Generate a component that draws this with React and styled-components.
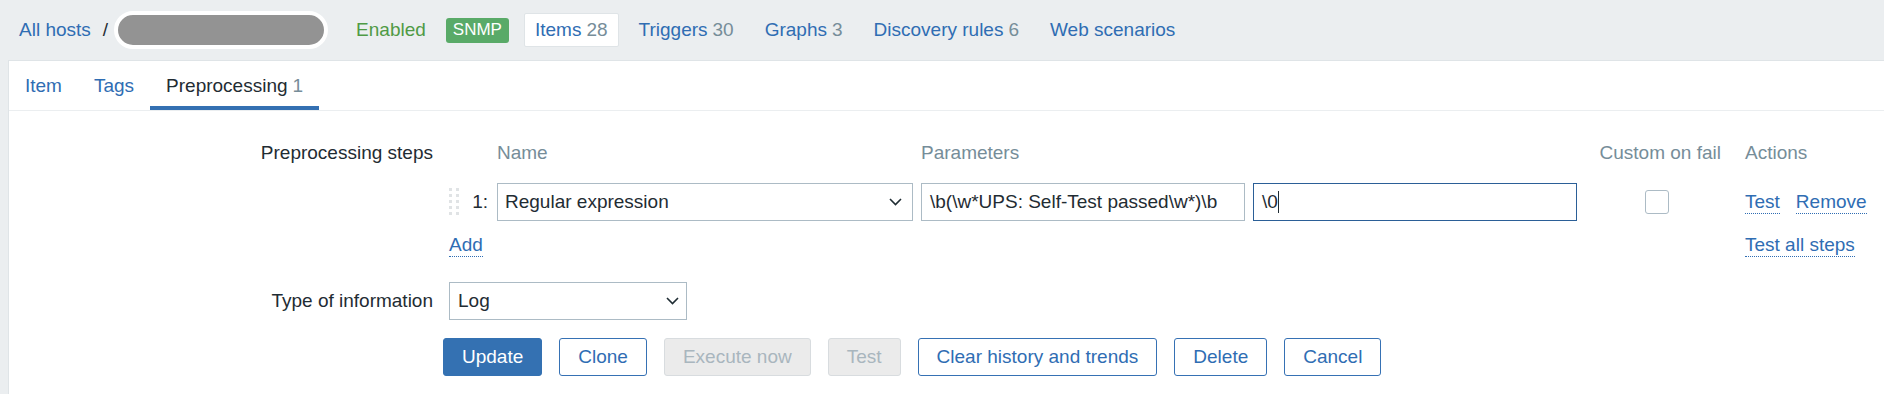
import React from 'react';
import styled, { createGlobalStyle, css } from 'styled-components';

const GlobalStyle = createGlobalStyle`
  html, body {
    margin: 0;
    padding: 0;
    background: #ebeef0;
  }
  body {
    font-family: "Liberation Sans", Arial, sans-serif;
    font-size: 19px;
    color: #1f2c33;
  }
  * {
    box-sizing: border-box;
  }
`;

const blue = '#2f6db3';
const gray = '#768d99';
const line = '#acbbc5';

const Header = styled.header`
  display: flex;
  align-items: center;
  height: 60px;
  padding-left: 19px;
  white-space: nowrap;
`;

const Link = styled.a`
  color: ${blue};
  text-decoration: none;
  cursor: pointer;
`;

const Slash = styled.span`
  margin: 0 6px 0 12px;
`;

const HostPill = styled.span`
  display: inline-block;
  width: 214px;
  height: 38px;
  border: 4px solid #ffffff;
  border-radius: 19px;
  background: #939393;
`;

const Status = styled.span`
  margin-left: 28px;
  color: #4f9a45;
`;

const Badge = styled.span`
  margin-left: 20px;
  display: inline-flex;
  align-items: center;
  height: 25px;
  padding: 0 7px;
  border-radius: 3px;
  background: #59aa68;
  color: #ffffff;
  font-size: 17px;
`;

const Nav = styled.nav`
  display: flex;
  align-items: center;
  gap: 9px;
  margin-left: 15px;
`;

const NavItem = styled.a`
  display: flex;
  align-items: center;
  height: 34px;
  padding: 0 10px;
  border: 1px solid ${({ active }) => (active ? '#dfe4e7' : 'transparent')};
  border-radius: 2px;
  background: ${({ active }) => (active ? '#ffffff' : 'transparent')};
  color: ${blue};
  text-decoration: none;
  cursor: pointer;
`;

const Count = styled.span`
  margin-left: 5px;
  color: ${gray};
`;

const Panel = styled.main`
  margin-left: 8px;
  min-height: 334px;
  background: #ffffff;
  border-top: 1px solid #dfe4e7;
  border-left: 1px solid #dfe4e7;
`;

const Tabs = styled.ul`
  display: flex;
  height: 50px;
  margin: 0;
  padding: 0;
  list-style: none;
  border-bottom: 1px solid #ebeef0;
`;

const Tab = styled.li`
  display: flex;
  align-items: center;
  height: 49px;
  padding: 5px 16px 0;
  border-bottom: 4px solid ${({ active }) => (active ? '#3470b2' : 'transparent')};
  color: ${({ active }) => (active ? '#1f2c33' : blue)};
  cursor: pointer;
`;

const Form = styled.form`
  display: grid;
  grid-template-columns: 424px auto;
  column-gap: 16px;
  row-gap: 18px;
  padding-top: 23px;
`;

const Label = styled.label`
  justify-self: end;
  height: 38px;
  line-height: 38px;
  align-self: ${({ top }) => (top ? 'start' : 'center')};
`;

const Steps = styled.div`
  display: flex;
  flex-direction: column;
`;

const StepRow = styled.div`
  display: grid;
  grid-template-columns: 40px 416px 324px 324px 136px 130px;
  column-gap: 8px;
  align-items: center;
  height: 38px;
  margin-top: ${({ gap }) => gap || 0}px;
`;

const HeadCell = styled.div`
  color: ${gray};
  grid-column: ${({ col }) => col};
  text-align: ${({ right }) => (right ? 'right' : 'left')};
  padding-left: ${({ pad }) => pad || 0}px;
`;

const HandleCell = styled.div`
  display: flex;
  align-items: center;
  justify-content: space-between;
`;

const StepNo = styled.span`
  padding-right: 1px;
`;

const AddCell = styled.div`
  grid-column: 1 / 3;
`;

const fieldBase = css`
  height: 38px;
  border: 1px solid ${line};
  background: #ffffff;
  font-family: inherit;
  font-size: 19px;
  color: #1f2c33;
`;

const SelectBox = styled.div`
  ${fieldBase}
  display: flex;
  align-items: center;
  justify-content: space-between;
  width: ${({ width }) => width}px;
  padding: 0 ${({ pr }) => pr || 10}px 0 ${({ pl }) => pl || 7}px;
  cursor: pointer;
`;

const TextInput = styled.div`
  ${fieldBase}
  display: flex;
  align-items: center;
  padding: 0 8px;
  white-space: nowrap;
  overflow: hidden;
  border-color: ${({ focused }) => (focused ? '#2b5f97' : line)};
`;

const Caret = styled.span`
  display: inline-block;
  width: 1.5px;
  height: 22px;
  background: #1f2c33;
`;

const CheckCell = styled.div`
  padding-left: 60px;
`;

const Checkbox = styled.span`
  display: block;
  width: 24px;
  height: 24px;
  border: 1px solid ${line};
  border-radius: 3px;
  background: #ffffff;
`;

const Actions = styled.div`
  display: flex;
  gap: 16px;
  padding-left: 16px;
  grid-column: ${({ col }) => col || 'auto'};
`;

const DottedLink = styled.a`
  display: inline-block;
  line-height: 23px;
  color: ${blue};
  border-bottom: 1px dotted ${blue};
  text-decoration: none;
  cursor: pointer;
`;

const Buttons = styled.div`
  display: flex;
  gap: 17px;
  margin-left: -6px;
`;

const Button = styled.button`
  height: 38px;
  padding: 0 18px;
  border-radius: 3px;
  font-family: inherit;
  font-size: 19px;
  cursor: pointer;
  ${({ variant }) =>
    variant === 'main'
      ? css`
          background: #3471b2;
          border: 1px solid #3471b2;
          color: #ffffff;
        `
      : variant === 'disabled'
      ? css`
          background: #ebebeb;
          border: 1px solid #d8dcdf;
          color: #a9b6be;
          cursor: default;
        `
      : css`
          background: #ffffff;
          border: 1px solid #3671b4;
          color: ${blue};
        `}
`;

const Chevron = () => (
  <svg width="13" height="8" viewBox="0 0 13 8" fill="none">
    <path d="M1 1l5.5 5.5L12 1" stroke="#1f2c33" strokeWidth="1.6" />
  </svg>
);

const DragHandle = () => (
  <svg width="10" height="28" viewBox="0 0 10 28">
    {[0, 1, 2, 3, 4].map((r) =>
      [0, 7].map((c) => (
        <rect key={`${r}-${c}`} x={c} y={r * 6} width="3" height="3" fill="#e0e3e5" />
      ))
    )}
  </svg>
);

const navItems = [
  { label: 'Items', count: 28, active: true },
  { label: 'Triggers', count: 30 },
  { label: 'Graphs', count: 3 },
  { label: 'Discovery rules', count: 6 },
  { label: 'Web scenarios' },
];

const buttons = [
  { label: 'Update', variant: 'main' },
  { label: 'Clone' },
  { label: 'Execute now', variant: 'disabled' },
  { label: 'Test', variant: 'disabled' },
  { label: 'Clear history and trends' },
  { label: 'Delete' },
  { label: 'Cancel' },
];

export default function App() {
  return (
    <>
      <GlobalStyle />
      <Header>
        <Link>All hosts</Link>
        <Slash>/</Slash>
        <HostPill />
        <Status>Enabled</Status>
        <Badge>SNMP</Badge>
        <Nav>
          {navItems.map((item) => (
            <NavItem key={item.label} active={item.active}>
              {item.label}
              {item.count !== undefined && <Count>{item.count}</Count>}
            </NavItem>
          ))}
        </Nav>
      </Header>
      <Panel>
        <Tabs>
          <Tab>Item</Tab>
          <Tab>Tags</Tab>
          <Tab active>
            Preprocessing<Count>1</Count>
          </Tab>
        </Tabs>
        <Form onSubmit={(e) => e.preventDefault()}>
          <Label top>Preprocessing steps</Label>
          <Steps>
            <StepRow>
              <HeadCell col={2}>Name</HeadCell>
              <HeadCell col="3 / 5">Parameters</HeadCell>
              <HeadCell col={5} right>Custom on fail</HeadCell>
              <HeadCell col={6} pad={16}>Actions</HeadCell>
            </StepRow>
            <StepRow gap={11}>
              <HandleCell>
                <DragHandle />
                <StepNo>1:</StepNo>
              </HandleCell>
              <SelectBox width={416}>
                Regular expression
                <Chevron />
              </SelectBox>
              <TextInput>\b(\w*UPS: Self-Test passed\w*)\b</TextInput>
              <TextInput focused>
                \0
                <Caret />
              </TextInput>
              <CheckCell>
                <Checkbox />
              </CheckCell>
              <Actions>
                <DottedLink>Test</DottedLink>
                <DottedLink>Remove</DottedLink>
              </Actions>
            </StepRow>
            <StepRow gap={5}>
              <AddCell>
                <DottedLink>Add</DottedLink>
              </AddCell>
              <Actions col="6">
                <DottedLink>Test all steps</DottedLink>
              </Actions>
            </StepRow>
          </Steps>
          <Label>Type of information</Label>
          <SelectBox width={238} pl={8} pr={7}>
            Log
            <Chevron />
          </SelectBox>
          <div />
          <Buttons>
            {buttons.map((b) => (
              <Button key={b.label} type="button" variant={b.variant}>
                {b.label}
              </Button>
            ))}
          </Buttons>
        </Form>
      </Panel>
    </>
  );
}
